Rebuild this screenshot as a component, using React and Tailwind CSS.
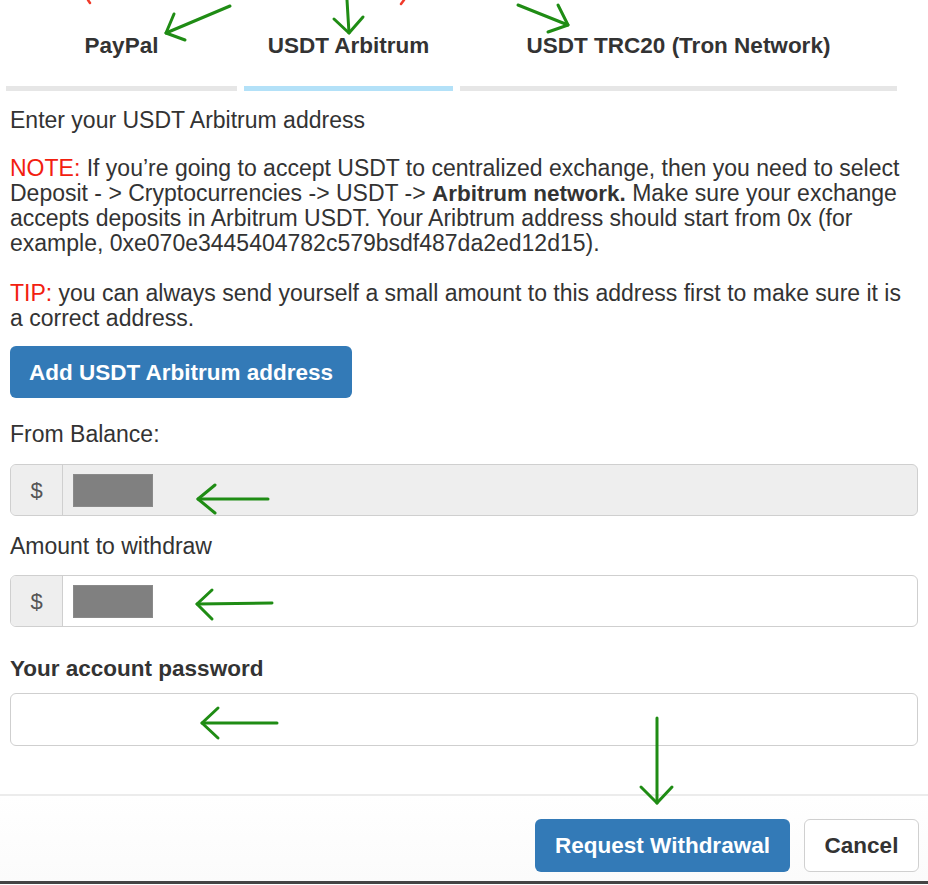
import React from 'react';

const tabs = [
  { label: 'PayPal', width: 'w-[231px]', bar: 'bg-[#e6e6e6]' },
  { label: 'USDT Arbitrum', width: 'w-[209px]', bar: 'bg-[#b3e1f8]' },
  { label: 'USDT TRC20 (Tron Network)', width: 'w-[437px]', bar: 'bg-[#e6e6e6]' },
];

// green hand-drawn annotation arrows: [tail, tip, head1, head2]
const arrows = [
  [[230, 6], [166, 33], [174, 14], [185, 40]],
  [[347, 0], [349, 33], [334, 19], [363, 17]],
  [[518, 5], [568, 25], [558, 5], [548, 32]],
  [[268, 499], [198, 499], [215, 485], [215, 513]],
  [[272, 603], [197, 604], [212, 590], [212, 619]],
  [[277, 723], [202, 723], [218, 708], [218, 738]],
  [[657, 718], [657, 803], [641, 787], [672, 787]],
];

const Annotations = () => (
  <svg className="absolute inset-0 pointer-events-none" width="928" height="885" viewBox="0 0 928 885">
    <g fill="none" stroke="#1f8c14" strokeWidth="3" strokeLinecap="round" strokeLinejoin="round">
      {arrows.map(([a, b, h1, h2], i) => (
        <g key={i}>
          <path d={`M${a[0]} ${a[1]} L${b[0]} ${b[1]}`} />
          <path d={`M${h1[0]} ${h1[1]} L${b[0]} ${b[1]} L${h2[0]} ${h2[1]}`} />
        </g>
      ))}
    </g>
    <g stroke="#f03a2a" strokeWidth="2.5" strokeLinecap="round">
      <path d="M88 0 L90 3" />
      <path d="M404 0 L401 4" />
    </g>
  </svg>
);

const DollarInput = ({ disabled }) => (
  <div className={`flex h-[52px] rounded-[6px] border border-[#cfcfcf] overflow-hidden ${disabled ? 'bg-[#eeeeee]' : 'bg-white'}`}>
    <div className="w-[52px] flex items-center justify-center bg-[#eeeeee] border-r border-[#cfcfcf] text-[22px] text-[#555]">$</div>
    <div className="flex items-center pl-[10px]">
      <div className="w-[80px] h-[33px] bg-[#808080] border border-[#8a8a8a]"></div>
    </div>
  </div>
);

export default function App() {
  return (
    <div className="relative w-[928px] h-[885px] overflow-hidden bg-white text-[#333] font-['Liberation_Sans',Arial,sans-serif]">
      <div className="flex gap-[7px] pl-[6px] pt-[33px]">
        {tabs.map((t) => (
          <div key={t.label} className={`${t.width} flex flex-col items-center`}>
            <div className="text-[22.5px] leading-[25px] font-bold text-[#333] whitespace-nowrap">{t.label}</div>
            <div className={`mt-[28px] h-[5px] w-full ${t.bar}`}></div>
          </div>
        ))}
      </div>

      <div className="px-[10px] text-[23px] leading-[25px]">
        <p className="mt-[17px]">Enter your USDT Arbitrum address</p>
        <p className="mt-[23px] whitespace-nowrap">
          <span className="text-[#f2200f]">NOTE:</span> If you’re going to accept USDT to centralized exchange, then you need to select<br />
          Deposit - &gt; Cryptocurrencies -&gt; USDT -&gt; <b className="text-[22.5px]">Arbitrum network.</b> Make sure your exchange<br />
          accepts deposits in Arbitrum USDT. Your Aribtrum address should start from 0x (for<br />
          example, 0xe070e3445404782c579bsdf487da2ed12d15).
        </p>
        <p className="mt-[25px] whitespace-nowrap">
          <span className="text-[#f2200f]">TIP:</span> you can always send yourself a small amount to this address first to make sure it is<br />
          a correct address.
        </p>
        <button className="mt-[15px] h-[52px] w-[342px] rounded-[6px] bg-[#337ab7] text-white font-bold text-[22.5px]">
          Add USDT Arbitrum address
        </button>

        <div className="mt-[24px]">From Balance:</div>
        <div className="mt-[17px]">
          <DollarInput disabled />
        </div>

        <div className="mt-[18px]">Amount to withdraw</div>
        <div className="mt-[16px]">
          <DollarInput />
        </div>

        <div className="mt-[29px] font-bold text-[22.5px]">Your account password</div>
        <div className="mt-[12px]">
          <div className="h-[53px] rounded-[6px] border border-[#cfcfcf] bg-white"></div>
        </div>
      </div>

      <div className="mt-[48px] border-t-2 border-[#ececec] bg-gradient-to-b from-white to-[#fbfbfb] h-[87px] flex justify-end items-start gap-[14px] pt-[23px] pr-[9px]">
        <button className="h-[53px] w-[255px] rounded-[6px] bg-[#337ab7] text-white font-bold text-[22.5px]">Request Withdrawal</button>
        <button className="h-[53px] w-[115px] rounded-[6px] bg-white border border-[#d0d0d0] text-[#333] font-bold text-[22.5px]">Cancel</button>
      </div>
      <div className="h-[3px] bg-[#444]"></div>

      <Annotations />
    </div>
  );
}
